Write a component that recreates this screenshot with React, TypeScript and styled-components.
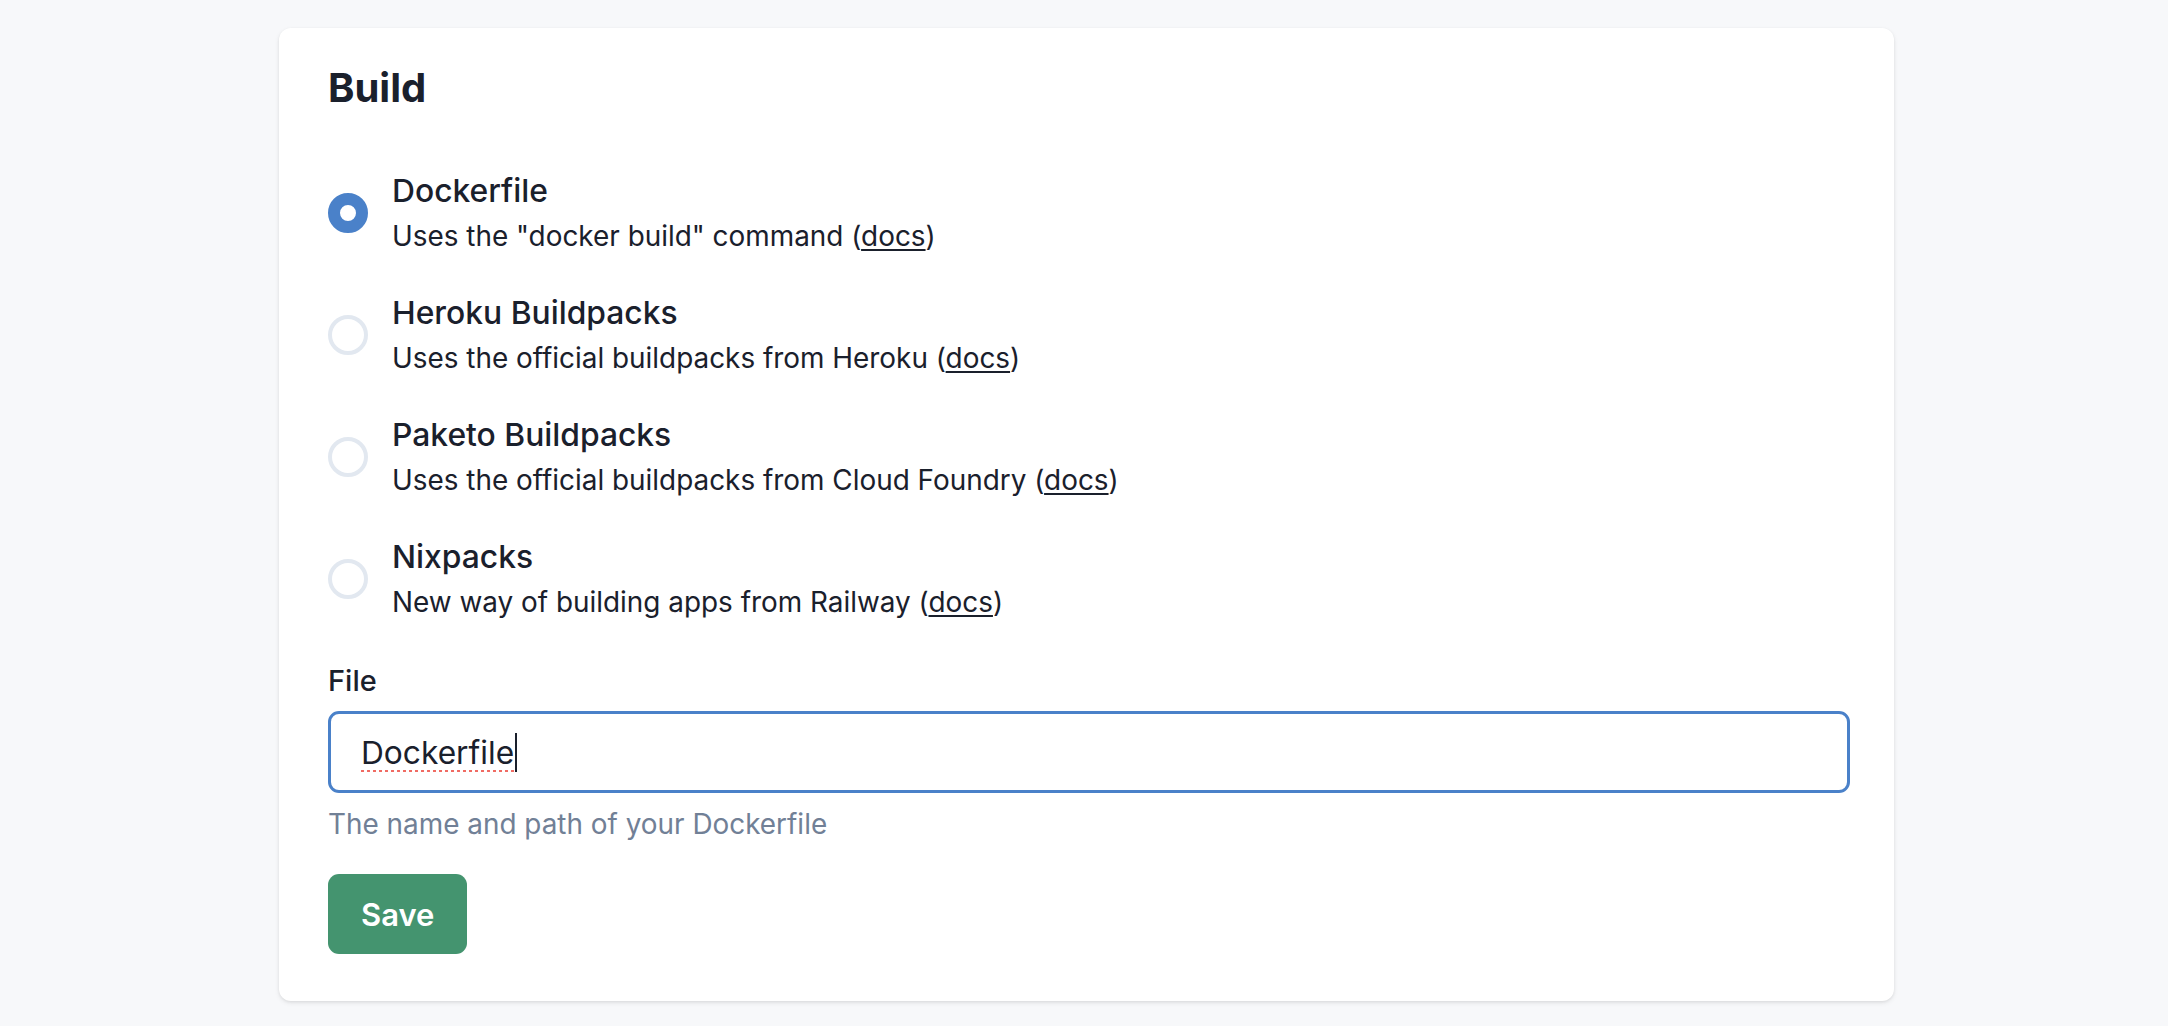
import { useLayoutEffect, useRef, useState } from 'react';
import styled, { createGlobalStyle } from 'styled-components';

const options = [
  { id: 'dockerfile', title: 'Dockerfile', desc: 'Uses the "docker build" command' },
  { id: 'heroku', title: 'Heroku Buildpacks', desc: 'Uses the official buildpacks from Heroku' },
  { id: 'paketo', title: 'Paketo Buildpacks', desc: 'Uses the official buildpacks from Cloud Foundry' },
  { id: 'nixpacks', title: 'Nixpacks', desc: 'New way of building apps from Railway' },
];

export default function App() {
  const [builder, setBuilder] = useState('dockerfile');
  const [file, setFile] = useState('Dockerfile');
  const [caretX, setCaretX] = useState(0);
  const inputRef = useRef<HTMLInputElement>(null);

  // place the drawn caret right after the typed text
  useLayoutEffect(() => {
    const el = inputRef.current;
    const ctx = document.createElement('canvas').getContext('2d');
    if (!el || !ctx) return;
    const cs = getComputedStyle(el);
    ctx.font = `${cs.fontWeight} ${cs.fontSize} ${cs.fontFamily}`;
    setCaretX(ctx.measureText(file).width);
  }, [file]);

  return (
    <>
      <GlobalStyle />
      <Page>
        <Card>
          <Heading>Build</Heading>

          <Options>
            {options.map((opt) => (
              <Option key={opt.id} onClick={() => setBuilder(opt.id)}>
                <Radio $checked={builder === opt.id} />
                <div>
                  <OptionTitle>{opt.title}</OptionTitle>
                  <OptionDesc>
                    {opt.desc} (<a href="#">docs</a>)
                  </OptionDesc>
                </div>
              </Option>
            ))}
          </Options>

          <FieldLabel htmlFor="file">File</FieldLabel>
          <Field>
            <TextInput
              id="file"
              ref={inputRef}
              value={file}
              onChange={(e) => setFile(e.target.value)}
              spellCheck={false}
            />
            <Caret style={{ left: 33.5 + caretX }} />
          </Field>
          <Hint>The name and path of your Dockerfile</Hint>

          <SaveButton>Save</SaveButton>
        </Card>
      </Page>
    </>
  );
}

const GlobalStyle = createGlobalStyle`
  body {
    margin: 0;
    background: #f7f8fa;
    font-family: Inter, "Noto Sans", sans-serif;
    color: #1a202c;
  }
`;

const Page = styled.main`
  padding: 28px 0 24px 279px;
`;

const Card = styled.section`
  width: 1615px;
  box-sizing: border-box;
  background: #fff;
  border-radius: 12px;
  padding: 37px 45px 47px 49px;
  box-shadow: 0 2px 5px rgba(0, 0, 0, 0.08), 0 1px 3px rgba(0, 0, 0, 0.06);
`;

const Heading = styled.h2`
  margin: 0 0 57px;
  font-size: 40px;
  line-height: 46px;
  font-weight: 700;
  color: #1a202c;
`;

const Options = styled.div`
  display: flex;
  flex-direction: column;
  gap: 32px;
`;

const Option = styled.label`
  display: flex;
  align-items: center;
  gap: 24px;
  cursor: pointer;
`;

const Radio = styled.span<{ $checked: boolean }>`
  flex: none;
  width: 40px;
  height: 40px;
  box-sizing: border-box;
  border-radius: 50%;
  background: #fff;
  border: ${({ $checked }) => ($checked ? '12px solid #4a81c9' : '4px solid #e2e8f0')};
`;

const OptionTitle = styled.div`
  font-size: 31.8px;
  line-height: 46px;
  font-weight: 500;
  color: #1a202c;
`;

const OptionDesc = styled.div`
  font-size: 27.9px;
  line-height: 44px;
  color: #1a202c;

  a {
    color: inherit;
    text-decoration: underline;
    text-underline-offset: 3px;
  }
`;

const FieldLabel = styled.label`
  display: block;
  margin-top: 37px;
  font-size: 29px;
  line-height: 40px;
  font-weight: 500;
  color: #1a202c;
`;

const Field = styled.div`
  position: relative;
  margin-top: 10px;
  width: 1522px;
`;

const TextInput = styled.input`
  display: block;
  width: 100%;
  height: 82px;
  box-sizing: border-box;
  padding: 0 30px;
  border: 3.5px solid #4a81c9;
  border-radius: 11px;
  outline: none;
  background: #fff;
  font-family: Inter, "Noto Sans", sans-serif;
  font-size: 31.7px;
  color: #1a202c;
  caret-color: transparent;
  text-decoration: underline dotted #f06b63;
  text-decoration-thickness: 3px;
  text-underline-offset: 6px;
`;

const Caret = styled.span`
  position: absolute;
  top: 22px;
  width: 2px;
  height: 39px;
  background: #1a202c;
  pointer-events: none;
`;

const Hint = styled.p`
  margin: 12px 0 0;
  font-size: 27.9px;
  line-height: 38px;
  color: #718096;
`;

const SaveButton = styled.button`
  display: block;
  margin-top: 31px;
  height: 80px;
  padding: 0 33px;
  border: none;
  border-radius: 11px;
  background: #44946f;
  color: #fff;
  font-family: Inter, "Noto Sans", sans-serif;
  font-size: 31px;
  font-weight: 600;
  cursor: pointer;
`;
